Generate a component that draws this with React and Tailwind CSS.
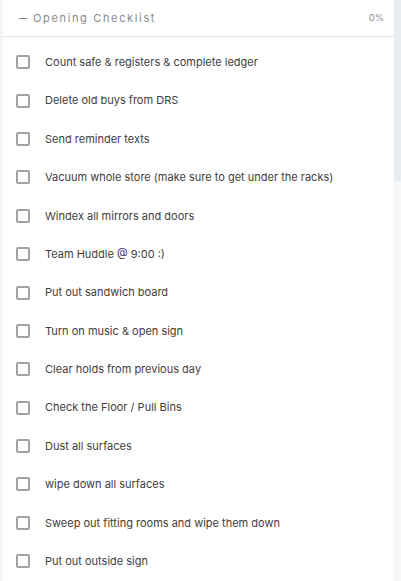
import React from 'react';

const items = [
  'Count safe & registers & complete ledger',
  'Delete old buys from DRS',
  'Send reminder texts',
  'Vacuum whole store (make sure to get under the racks)',
  'Windex all mirrors and doors',
  'Team Huddle @ 9:00 :)',
  'Put out sandwich board',
  'Turn on music & open sign',
  'Clear holds from previous day',
  'Check the Floor / Pull Bins',
  'Dust all surfaces',
  'wipe down all surfaces',
  'Sweep out fitting rooms and wipe them down',
  'Put out outside sign',
];

const App = () => {
  return (
    <div className="flex h-[581px] w-[401px] overflow-hidden bg-[#f7f7f7] font-['Inter',sans-serif]">
      <div className="w-[3px] bg-[#f5f5f5]" />
      <div className="flex-1 bg-white">
        {/* Header */}
        <div className="flex h-[37px] items-center justify-between border-b border-[#e3e3e3] pl-[16px] pr-[10px]">
          <div className="flex items-center text-[11px] tracking-[0.15em] text-[#8a8a8a]">
            <span className="mr-[6px] inline-block h-px w-[8px] bg-[#8a8a8a]" />
            Opening Checklist
          </div>
          <span className="text-[9.5px] text-[#8f8f8f]">0%</span>
        </div>

        {/* Items */}
        <div className="pt-[6px]">
          {items.map((item, i) => (
            <label key={i} className="flex h-[38.4px] items-center">
              <span className="ml-[13px] mr-[15px] h-[14px] w-[14px] shrink-0 rounded-[2px] border-2 border-[#a3a3a3] bg-white" />
              <span className="text-[11px] text-[#404040]">{item}</span>
            </label>
          ))}
        </div>
      </div>
      <div className="flex w-[7px] flex-col bg-[#f7f7f7]">
        <div className="h-[181px] bg-[#e8edf2]" />
      </div>
    </div>
  );
};

export default App;
